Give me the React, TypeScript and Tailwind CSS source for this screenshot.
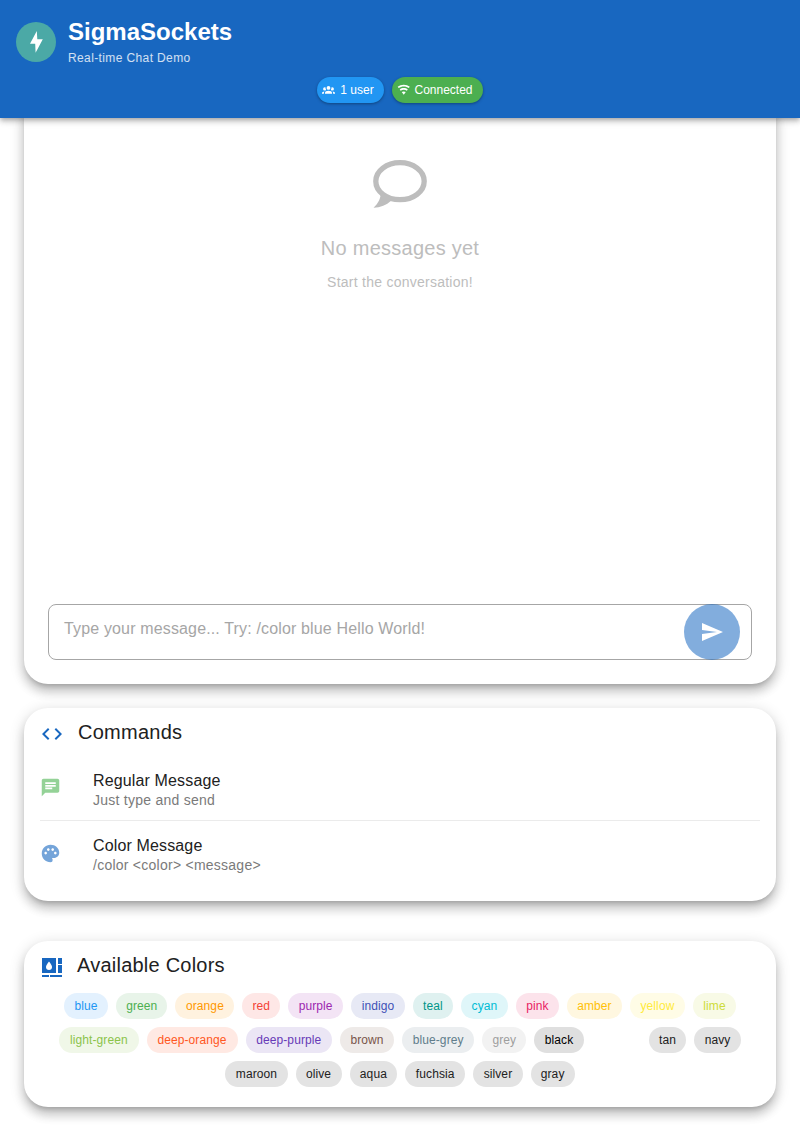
import { MdSend, MdCode, MdChat, MdPalette } from "react-icons/md";

const cardShadow =
  "bg-white rounded-[24px] shadow-[0_5px_5px_-3px_rgba(0,0,0,0.2),0_8px_10px_1px_rgba(0,0,0,0.14),0_3px_14px_2px_rgba(0,0,0,0.12)]";

type ColorChip = { name: string; style: string; width: string };

const rows: ColorChip[][] = [
  [
    { name: "blue", style: "bg-[#e3f1fe] text-[#2196f3]", width: "w-[44px]" },
    { name: "green", style: "bg-[#e8f4e9] text-[#4caf50]", width: "w-[51.4px]" },
    { name: "orange", style: "bg-[#fff2df] text-[#ff9800]", width: "w-[59px]" },
    { name: "red", style: "bg-[#fee7e6] text-[#f44336]", width: "w-[37.700px]" },
    { name: "purple", style: "bg-[#f3e4f5] text-[#9c27b0]", width: "w-[55px]" },
    { name: "indigo", style: "bg-[#e7e9f5] text-[#3f51b5]", width: "w-[53.700px]" },
    { name: "teal", style: "bg-[#dff1f0] text-[#009688]", width: "w-[40.4px]" },
    { name: "cyan", style: "bg-[#dff6f9] text-[#00bcd4]", width: "w-[46.6px]" },
    { name: "pink", style: "bg-[#fce3eb] text-[#e91e63]", width: "w-[43.2px]" },
    { name: "amber", style: "bg-[#fff7e0] text-[#ffc107]", width: "w-[55px]" },
    { name: "yellow", style: "bg-[#fffce6] text-[#ffeb3b]", width: "w-[55px]" },
    { name: "lime", style: "bg-[#f8fae6] text-[#cddc39]", width: "w-[43px]" },
  ],
  [
    { name: "light-green", style: "bg-[#f0f7e8] text-[#8bc34a]", width: "w-[79.3px]" },
    { name: "deep-orange", style: "bg-[#ffe9e3] text-[#ff5722]", width: "w-[91px]" },
    { name: "deep-purple", style: "bg-[#ebe6f5] text-[#673ab7]", width: "w-[86.5px]" },
    { name: "brown", style: "bg-[#eeeae8] text-[#795548]", width: "w-[54px]" },
    { name: "blue-grey", style: "bg-[#ebeef0] text-[#607d8b]", width: "w-[72.3px]" },
    { name: "grey", style: "bg-[#f2f2f2] text-[#9e9e9e]", width: "w-[44px]" },
    { name: "black", style: "bg-[#dfdfdf] text-black", width: "w-[49.4px]" },
    { name: "white", style: "bg-white text-white", width: "w-[49px]" },
    { name: "tan", style: "bg-[#e3e3e3] text-[#212121]", width: "w-[37.6px]" },
    { name: "navy", style: "bg-[#e3e3e3] text-[#212121]", width: "w-[46.5px]" },
  ],
  [
    { name: "maroon", style: "bg-[#e3e3e3] text-[#212121]", width: "w-[62.2px]" },
    { name: "olive", style: "bg-[#e3e3e3] text-[#212121]", width: "w-[46px]" },
    { name: "aqua", style: "bg-[#e3e3e3] text-[#212121]", width: "w-[47.700px]" },
    { name: "fuchsia", style: "bg-[#e3e3e3] text-[#212121]", width: "w-[60px]" },
    { name: "silver", style: "bg-[#e3e3e3] text-[#212121]", width: "w-[49.4px]" },
    { name: "gray", style: "bg-[#e3e3e3] text-[#212121]", width: "w-[44px]" },
  ],
];

function BoltIcon() {
  return (
    <svg viewBox="0 0 13 22" className="h-[22px] w-[13px]" fill="currentColor">
      <path d="M6.800 0 0 12.700h5.200l.4 9L12.800 8.200H7.300z" />
    </svg>
  );
}

function GroupIcon() {
  return (
    <svg viewBox="0 0 24 24" className="size-[13px] shrink-0" fill="currentColor">
      <path d="M12,5.5A3.5,3.5 0 0,1 15.5,9A3.5,3.5 0 0,1 12,12.5A3.5,3.5 0 0,1 8.5,9A3.5,3.5 0 0,1 12,5.5M5,8C5.56,8 6.08,8.15 6.53,8.42C6.38,9.85 6.8,11.27 7.66,12.38C7.16,13.34 6.16,14 5,14A3,3 0 0,1 2,11A3,3 0 0,1 5,8M19,8A3,3 0 0,1 22,11A3,3 0 0,1 19,14C17.84,14 16.84,13.34 16.34,12.38C17.2,11.27 17.62,9.85 17.47,8.42C17.92,8.15 18.44,8 19,8M5.5,18.25C5.5,16.18 8.41,14.5 12,14.5C15.59,14.5 18.5,16.18 18.5,18.25V20H5.5V18.25M0,20V18.5C0,17.11 1.89,15.94 4.45,15.6C3.86,16.28 3.5,17.22 3.5,18.25V20H0M24,20H20.5V18.25C20.5,17.22 20.14,16.28 19.55,15.6C22.11,15.94 24,17.11 24,18.5V20Z" />
    </svg>
  );
}

function WifiIcon() {
  return (
    <svg viewBox="0 0 24 24" className="size-[13.5px] shrink-0" fill="currentColor">
      <path d="M12 21l3.6-4.8C14.6 15.45 13.35 15 12 15s-2.6.45-3.6 1.2L12 21zM12 3C7.95 3 4.21 4.34 1.2 6.6L3 9c2.5-1.88 5.62-3 9-3s6.5 1.12 9 3l1.8-2.4C19.79 4.34 16.05 3 12 3zm0 6c-2.7 0-5.19.89-7.2 2.4l1.8 2.4c1.5-1.13 3.37-1.8 5.4-1.8s3.9.67 5.4 1.8l1.8-2.4C17.19 9.89 14.7 9 12 9z" />
    </svg>
  );
}

function SwatchIcon() {
  return (
    <svg viewBox="0 0 20 19" className="mt-1 h-[19px] w-5 shrink-0">
      <path fill="#1867c0" d="M0 0h14v15H0zM16 0h4v6h-4zM16 7h4v8h-4zM0 17h7v2H0zM8 17h12v2H8z" />
      <path fill="#fff" d="M7 3.500s-3 3.500-3 5.500a3 3 0 0 0 6 0c0-2-3-5.500-3-5.500z" />
    </svg>
  );
}

export default function App() {
  return (
    <div className="flex h-[1131px] w-[800px] flex-col overflow-hidden bg-white font-['Liberation_Sans',Arial,sans-serif] text-[#212121]">
      <header className="z-10 h-[118px] shrink-0 bg-[#1867c0] pt-[18px] text-white shadow-[0_2px_4px_-1px_rgba(0,0,0,0.2),0_4px_5px_rgba(0,0,0,0.14),0_1px_10px_rgba(0,0,0,0.12)]">
        <div className="flex h-[50px] items-start gap-3 pl-4">
          <div className="mt-1 flex size-10 items-center justify-center rounded-full bg-[#4ba9a6]">
            <BoltIcon />
          </div>
          <div>
            <h1 className="text-[24px] font-bold leading-7">SigmaSockets</h1>
            <p className="mt-1 text-[12px] leading-4 tracking-[0.38px] text-white/80">Real-time Chat Demo</p>
          </div>
        </div>
        <div className="mt-[8.5px] flex justify-center gap-2 text-[12px]">
          <div className="flex h-[26px] w-[66.2px] items-center gap-[5px] rounded-full bg-[#2196f3] pl-[5px] shadow-[0_1px_3px_rgba(0,0,0,0.35)]">
            <GroupIcon />
            <span className="whitespace-nowrap">1 user</span>
          </div>
          <div className="flex h-[26px] w-[91.2px] items-center gap-1 rounded-full bg-[#4caf50] pl-[5.5px] shadow-[0_1px_3px_rgba(0,0,0,0.35)]">
            <WifiIcon />
            <span className="whitespace-nowrap">Connected</span>
          </div>
        </div>
      </header>

      <section className={`${cardShadow} mx-6 -mt-6 flex h-[590px] shrink-0 flex-col px-6 pb-6`}>
        <div className="flex flex-1 flex-col items-center pt-[66px] text-[#bdbdbd]">
          <svg viewBox="0 0 54 49" className="h-[49px] w-[54px]">
            <ellipse cx="27" cy="21.200" rx="24.200" ry="18.500" fill="none" stroke="currentColor" strokeWidth="5.300" />
            <path d="M7.500 33c.5 5-2 10-7 14.800 7-.3 13-2.500 17.500-7l-3-5z" fill="currentColor" />
          </svg>
          <p className="mt-[23px] text-[20px] leading-8 tracking-[0.25px]">No messages yet</p>
          <p className="mt-2 text-[14px] leading-5 tracking-[0.25px]">Start the conversation!</p>
        </div>
        <div className="flex h-14 items-center justify-between rounded-lg border border-[#a6a6a6] pl-[15px] pr-[11px]">
          <span className="-mt-[7px] text-[16px] tracking-[0.15px] text-[#a6a6a6]">Type your message... Try: /color blue Hello World!</span>
          <button className="-my-px flex size-14 shrink-0 items-center justify-center rounded-full bg-[#1867c0]/54 text-white">
            <MdSend className="size-6" />
          </button>
        </div>
      </section>

      <section className={`${cardShadow} mx-6 mt-6 h-[193px] shrink-0 px-4`}>
        <div className="flex h-[49px] items-center gap-[14px]">
          <MdCode className="mt-[3px] size-6 text-[#1867c0]" />
          <h2 className="-mt-0.5 text-[20px] tracking-[0.25px]">Commands</h2>
        </div>
        <div className="flex h-[64px] items-start border-b border-black/8 pt-[13.5px]">
          <MdChat className="mt-[6.5px] size-[21px] text-[#94d297]" />
          <div className="ml-8">
            <p className="text-[16px] leading-5 tracking-[0.14px]">Regular Message</p>
            <p className="-mt-px text-[14px] leading-5 tracking-[0.25px] text-[#7a7a7a]">Just type and send</p>
          </div>
        </div>
        <div className="flex h-[64px] items-start pt-[15px]">
          <MdPalette className="mt-[6.5px] size-[21px] text-[#74a4d9]" />
          <div className="ml-8">
            <p className="text-[16px] leading-5 tracking-[0.14px]">Color Message</p>
            <p className="-mt-px text-[14px] leading-5 tracking-[0.25px] text-[#7a7a7a]">/color &lt;color&gt; &lt;message&gt;</p>
          </div>
        </div>
      </section>

      <section className={`${cardShadow} mx-6 mt-10 h-[166px] shrink-0 px-4`}>
        <div className="flex h-[49px] items-center gap-[15px] pl-[2px]">
          <SwatchIcon />
          <h2 className="-mt-0.5 text-[20px] tracking-[0.23px]">Available Colors</h2>
        </div>
        <div className="mt-[3px] flex flex-col gap-2">
          {rows.map((row, index) => (
            <div key={index} className="flex justify-center gap-2">
              {row.map((chip) => (
                <span
                  key={chip.name}
                  className={`${chip.style} ${chip.width} flex h-[26px] shrink-0 items-center justify-center whitespace-nowrap rounded-full text-[12px] tracking-[0.1px]`}
                >
                  {chip.name}
                </span>
              ))}
            </div>
          ))}
        </div>
      </section>
    </div>
  );
}
